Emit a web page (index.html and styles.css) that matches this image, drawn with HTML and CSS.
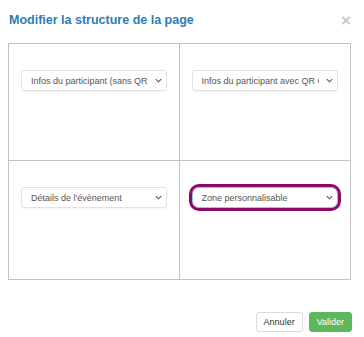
FILE: index.html
```html
<!DOCTYPE html>
<html lang="fr">
<head>
    <meta charset="UTF-8">
    <meta name="viewport" content="width=device-width, initial-scale=1.0">
    <title>Modifier la structure de la page</title>
    <link rel="stylesheet" href="styles.css">
</head>
<body>

<div class="modal">
    <div class="modal-header">
        <h4 class="modal-title">Modifier la structure de la page</h4>
        <button class="close" type="button">&times;</button>
    </div>

    <div class="layout-grid">
        <div class="cell">
            <select class="zone-select">
                <option>Infos du participant (sans QR code)</option>
            </select>
        </div>
        <div class="cell">
            <select class="zone-select">
                <option>Infos du participant avec QR Code</option>
            </select>
        </div>
        <div class="cell">
            <select class="zone-select">
                <option>Détails de l'évènement</option>
            </select>
        </div>
        <div class="cell">
            <select class="zone-select focused">
                <option>Zone personnalisable</option>
            </select>
        </div>
    </div>

    <div class="modal-footer">
        <button class="btn btn-default" type="button">Annuler</button>
        <button class="btn btn-success" type="button">Valider</button>
    </div>
</div>

</body>
</html>
```

FILE: styles.css
```css
body {
    margin: 0;
    font-family: "Liberation Sans", Arial, sans-serif;
    background-color: #fff;
    color: #333;
}
.modal {
    width: 364px;
    padding: 0 13px 0 8px;
    box-sizing: border-box;
}
.modal-header {
    height: 43px;
    display: flex;
    align-items: center;
    justify-content: space-between;
    padding-bottom: 3px;
    box-sizing: border-box;
}
.modal-title {
    margin: 0 0 0 1px;
    font-size: 12.5px;
    font-weight: bold;
    color: #2f7db3;
}
.close {
    border: none;
    background: none;
    padding: 0;
    margin-right: 0;
    font-family: "Liberation Sans", Arial, sans-serif;
    font-size: 17px;
    font-weight: bold;
    line-height: 1;
    color: #c8c8c8;
    cursor: pointer;
}
.layout-grid {
    display: grid;
    grid-template-columns: 1fr 1fr;
    grid-template-rows: 117px 118px;
    border: 1px solid #c2c2c2;
}
.cell {
    padding: 26px 12px 0 12px;
}
.cell:nth-child(odd) {
    border-right: 1px solid #c2c2c2;
}
.cell:nth-child(-n+2) {
    border-bottom: 1px solid #c2c2c2;
}
.zone-select {
    display: block;
    width: 100%;
    height: 21px;
    padding: 0 18px 0 9px;
    border: 1px solid #e2e2e2;
    border-radius: 3px;
    background-color: #fff;
    background-image: url("data:image/svg+xml,%3Csvg xmlns='http://www.w3.org/2000/svg' width='7' height='5' viewBox='0 0 7 5'%3E%3Cpath d='M0.8 1.2 L3.5 3.8 L6.2 1.2' fill='none' stroke='%23555' stroke-width='1.1'/%3E%3C/svg%3E");
    background-repeat: no-repeat;
    background-position: right 4px center;
    -webkit-appearance: none;
    appearance: none;
    font-family: "Liberation Sans", Arial, sans-serif;
    font-size: 9px;
    color: #555;
    box-shadow: 0 1px 1px rgba(0, 0, 0, 0.04);
}
.focused {
    border-color: #9ec3e6;
    border-radius: 7px;
    outline: 3px solid #8c0a67;
    outline-offset: 0;
}
.modal-footer {
    display: flex;
    justify-content: flex-end;
    gap: 6px;
    padding-top: 32px;
    margin-right: -1px;
}
.btn {
    height: 20px;
    padding: 0 7px;
    border-radius: 3px;
    font-family: "Liberation Sans", Arial, sans-serif;
    font-size: 9px;
    cursor: pointer;
}
.btn-default {
    background-color: #fff;
    border: 1px solid #dcdcdc;
    color: #333;
}
.btn-success {
    background-color: #5cb85c;
    border: 1px solid #5cb85c;
    color: #fff;
}
```
